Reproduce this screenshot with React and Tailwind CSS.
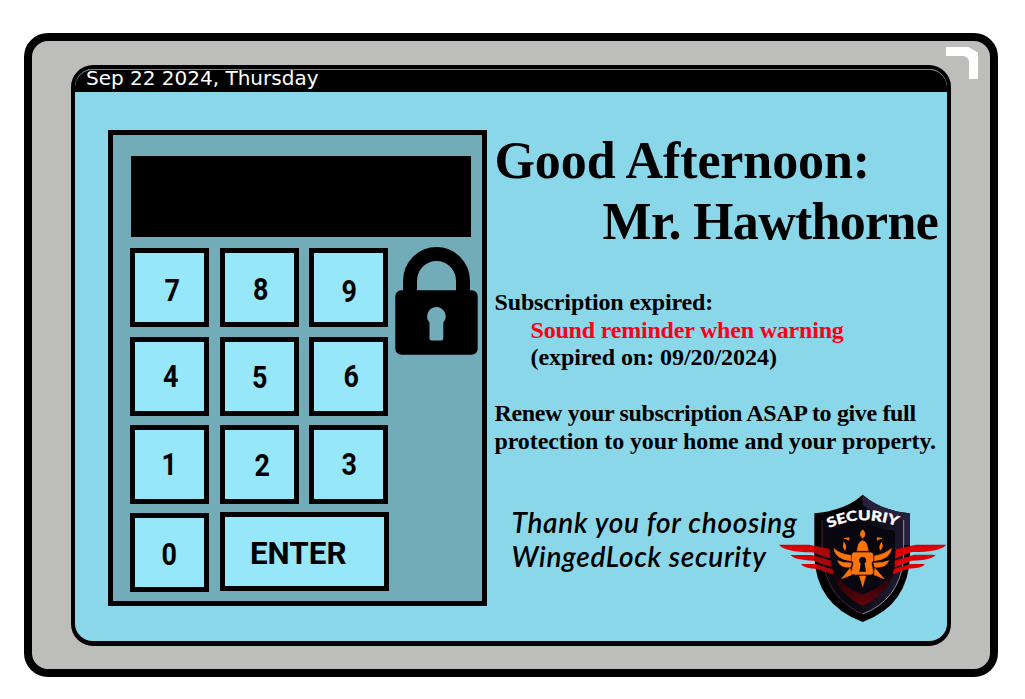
import React from "react";

const KEYS = [
  { label: "7", nudge: "translate-x-[2px] translate-y-[2px]" },
  { label: "8", nudge: "translate-x-[1.5px] translate-y-[1px]" },
  { label: "9", nudge: "translate-x-[1px] translate-y-[2.5px]" },
  { label: "4", nudge: "translate-x-[0.5px] -translate-y-[0.5px]" },
  { label: "5", nudge: "translate-x-[0.5px] translate-y-[0.5px]" },
  { label: "6", nudge: "translate-x-[3px] -translate-y-[0.5px]" },
  { label: "1", nudge: "-translate-x-[1px]" },
  { label: "2", nudge: "translate-x-[3px] translate-y-[1px]" },
  { label: "3", nudge: "translate-x-[1px]" },
  { label: "0", nudge: "-translate-x-[1px] translate-y-[0.5px]" },
];

function Key({ label, nudge }) {
  return (
    <button className="flex h-[79px] w-[79px] items-center justify-center border-[5px] border-black bg-[#96e7fa]">
      <span className={"font-['Roboto',sans-serif] text-[32px] leading-none font-bold " + nudge}>
        <span className="inline-block scale-x-[0.84]">{label}</span>
      </span>
    </button>
  );
}

function Padlock() {
  return (
    <svg className="ml-[7px] h-[108px] w-[83px] shrink-0" viewBox="0 0 83 108">
      <path d="M15 48V34a26.5 27 0 0 1 53 0V48" fill="none" stroke="#000" strokeWidth="14" />
      <rect x="0.3" y="43.3" width="82.4" height="64.5" rx="6" />
      <path
        d="M41.300 60a9.400 9.400 0 0 1 7 15.600V91.500q0 2-2 2h-9.800q-2 0-2-2V75.600a9.400 9.400 0 0 1 6.800-15.600z"
        fill="#72acb9"
      />
    </svg>
  );
}

function Keypad() {
  return (
    <section className="mt-[38px] ml-[33px] h-[476px] w-[379px] shrink-0 border-[5px] border-black bg-[#72acb9]">
      <div className="mt-[21px] ml-[18px] h-[81px] w-[340px] bg-black" />
      <div className="mt-[10px] ml-[17.3px] flex">
        <div className="grid shrink-0 grid-cols-[79px_79px_79px] gap-x-[10.3px] gap-y-[9.3px] pt-[1.4px]">
          {KEYS.map((k) => (
            <Key key={k.label} label={k.label} nudge={k.nudge} />
          ))}
          <button className="col-span-2 -mt-px -mr-px flex h-[79px] items-center justify-center border-[5px] border-black bg-[#96e7fa]">
            <span className="-translate-x-[6px] translate-y-[0.5px] font-['Roboto',sans-serif] text-[32px] leading-none font-bold">
              <span className="inline-block scale-x-[0.98]">ENTER</span>
            </span>
          </button>
        </div>
        <Padlock />
      </div>
    </section>
  );
}

function Badge() {
  return (
    <svg className="absolute top-[416px] left-[695px] h-[145px] w-[185px]" viewBox="0 0 555 435">
      <defs>
        <linearGradient id="shine" x1="0" x2="1" y1="0" y2="0.2">
          <stop offset="0" stopColor="#090811" />
          <stop offset="0.5" stopColor="#080710" />
          <stop offset="1" stopColor="#1d182c" />
        </linearGradient>
        <linearGradient id="ember" x1="0" x2="0" y1="0" y2="1">
          <stop offset="0" stopColor="#090510" />
          <stop offset="0.65" stopColor="#19040b" />
          <stop offset="1" stopColor="#680308" />
        </linearGradient>
        <path id="arc" d="M177 129Q278 83 390 127" />
      </defs>
      <path d="M278 29Q333 77 420 85V210Q417 360 278 411Q136 359 133 210V85Q225 77 278 29z" fill="#000" />
      <path d="M278 29Q333 77 420 85V180H380V100Q325 96 278 61z" fill="#28213d" />
      <path d="M278 60Q329 97 401 105V225Q386 350 278 388Q169 350 154 225V105Q228 97 278 60z" fill="url(#shine)" />
      <path d="M156 105V218Q174 342 278 387" fill="none" stroke="#63303d" strokeWidth="2" />
      <path d="M401 105V225Q386 346 278 387" fill="none" stroke="#a79db4" strokeWidth="2.5" />
      <path d="M278 112Q318 133 375 138V255Q350 330 278 362Q208 329 181 255V138Q233 134 278 112z" fill="url(#ember)" />
      <path d="M278 112Q318 133 375 138V240Q351 302 278 328Q207 302 187 240V138Q233 134 278 112z" fill="#08060e" />
      <path d="M27 179H118L179 193V220L126 202Q44 201 27 179z" fill="#dc0004" />
      <path d="M62 210H125L182 227V245L131 227Q73 225 62 210z" fill="#dc0004" />
      <path d="M93 237H138L188 254V268L145 252Q101 251 93 237z" fill="#dc0004" />
      <path d="M133 182L179 193V220L133 204zM133 212L182 227V245L133 228zM140 238L188 254V268L145 252z" fill="#a8080b" />
      <path d="M529 179H438L378 193L375 220L426 201Q512 201 529 179z" fill="#dc0004" />
      <path d="M497 210H430L374 227V247L424 227Q485 226 497 210z" fill="#dc0004" />
      <path d="M465 237H422L372 252L368 268L413 251Q456 251 465 237z" fill="#dc0004" />
      <path d="M432 210H490" stroke="#555" strokeWidth="2" />
      <g fill="#ff7407" stroke="#ff7407" strokeWidth="2" strokeLinejoin="round">
        <path d="M278 134Q292 147 278 160Q264 147 278 134z" />
        <path d="M261 197L266 177Q278 157 290 177L295 197z" />
        <path d="M252 203H302Q309 203 309 211V227L304 234L309 260Q309 268 302 268H252Q244 268 245 260L251 234L246 227V211Q246 203 252 203z" />
        <path d="M192 191Q211 208 242 211L243 227Q196 222 192 191zM203 227Q220 235 244 234L242 246Q212 250 203 227z" />
        <path d="M364 191Q345 208 314 213L313 227Q360 222 364 191zM356 227Q338 235 311 234L314 246Q347 250 356 227z" />
        <path d="M240 250L215 281L245 269zM315 250L342 281L312 269zM269 273H287L278 305z" />
        <path d="M222 160L237 158L236 166L229 162zM336 160L321 158L322 166L329 162z" />
        <path d="M222 172Q232 184 225 196Q216 186 222 172zM335 172Q325 184 331 196Q341 186 335 172z" />
      </g>
      <path d="M278 215a11 11 0 0 1 6 20l4 25h-20l4-25a11 11 0 0 1 6-20z" fill="#08060e" />
      <text className="font-['Lato',sans-serif] text-[41px] font-black" fill="#fff" stroke="#fff" strokeWidth="1">
        <textPath href="#arc" textLength="210" lengthAdjust="spacingAndGlyphs">SECURIY</textPath>
      </text>
    </svg>
  );
}

function Message() {
  return (
    <section className="ml-[7.5px] flex w-[455px] shrink-0 flex-col whitespace-nowrap">
      <h1 className="mt-[38px] font-['Liberation_Serif',serif] text-[52px] leading-[61px] font-bold">
        <span className="block tracking-[-0.1px]">Good Afternoon:</span>
        <span className="block pl-[108px] tracking-[-0.7px]">Mr. Hawthorne</span>
      </h1>
      <div className="mt-[37px] font-['Liberation_Serif',serif] text-[24px] leading-[27.700px] font-bold">
        <p className="tracking-[-0.14px]">Subscription expired:</p>
        <p className="pl-[36px] tracking-[-0.2px] text-[#fb0016]">Sound reminder when warning</p>
        <p className="pl-[36px] tracking-[-0.05px]">(expired on: 09/20/2024)</p>
        <p className="mt-[27.700px] tracking-[-0.35px]">Renew your subscription ASAP to give full</p>
        <p className="tracking-[-0.1px]">protection to your home and your property.</p>
      </div>
      <p className="mt-[50px] ml-[17px] font-['Lato',sans-serif] text-[28px] leading-[34px] font-semibold italic">
        <span className="block tracking-[0.7px]">Thank you for choosing</span>
        <span className="block tracking-[0.65px]">WingedLock security</span>
      </p>
    </section>
  );
}

export default function App() {
  return (
    <div className="flex h-[699px] w-[1025px] overflow-hidden bg-white pt-[33px] pl-[24px] text-black">
      <div className="relative h-[644px] w-[974px] rounded-[24px] border-[8px] border-black bg-[#bdbdbb] pt-[24px] pl-[39px]">
        <main className="relative h-[581px] w-[880px] overflow-hidden rounded-[22px] border-[4px] border-b-[5px] border-black bg-[#8bd7ea]">
          <header className="h-[23px] rounded-t-[18px] border-t border-[#858585] bg-black pl-[11px] font-['DejaVu_Sans',sans-serif] text-[20px] leading-[16px] text-white">
            Sep 22 2024, Thursday
          </header>
          <div className="flex">
            <Keypad />
            <Message />
          </div>
          <Badge />
        </main>
        <svg className="absolute top-[3px] right-[12px] h-[40px] w-[40px]" viewBox="0 0 120 120">
          <path d="M24 9H91L121 26V105H93V52Q90 38 76 36H24z" fill="#fff" />
        </svg>
      </div>
    </div>
  );
}
